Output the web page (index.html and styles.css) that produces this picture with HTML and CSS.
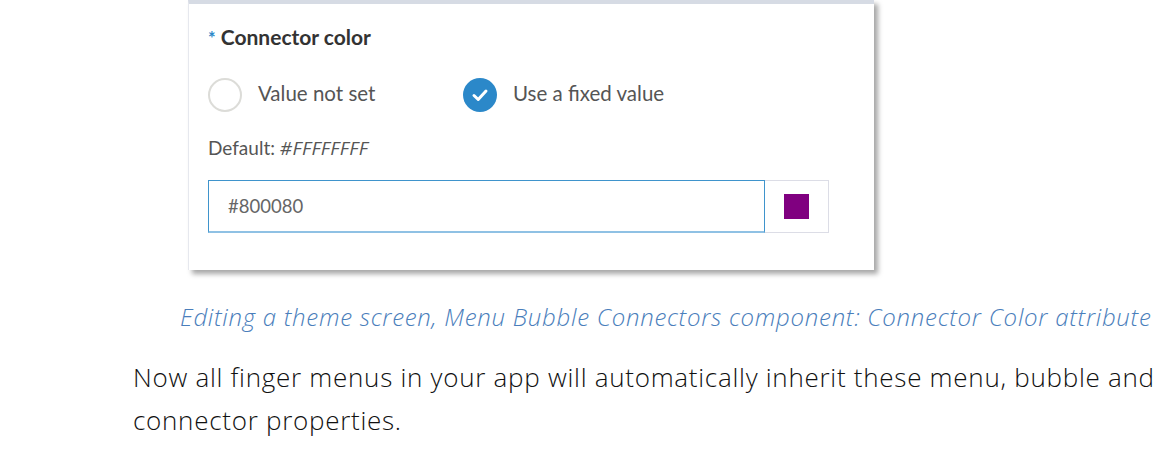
FILE: index.html
```html
<!DOCTYPE html>
<html>
<head>
<meta charset="utf-8">
<link rel="stylesheet" href="styles.css">
</head>
<body>
<div class="card">
  <div class="title"><span class="req">*</span> Connector color</div>
  <div class="radios">
    <div class="opt opt-first"><span class="radio"></span><span class="lbl">Value not set</span></div>
    <div class="opt"><span class="radio checked"><svg width="34" height="34" viewBox="0 0 34 34"><circle cx="17" cy="17" r="17" fill="#2b88c9"/><polyline points="11,17.5 15.2,21.5 23,13" fill="none" stroke="#fff" stroke-width="3" stroke-linecap="round" stroke-linejoin="round"/></svg></span><span class="lbl">Use a fixed value</span></div>
  </div>
  <div class="default">Default: <em>#FFFFFFFF</em></div>
  <div class="field">
    <div class="input">#800080</div>
    <div class="swatch"><span class="chip"></span></div>
  </div>
</div>
<div class="caption">Editing a theme screen, Menu Bubble Connectors component: Connector Color attribute</div>
<div class="body-text">Now all finger menus in your app will automatically inherit these menu, bubble and<br>connector properties.</div>
</body>
</html>
```
FILE: styles.css
```css
html, body { margin: 0; padding: 0; background: #fff; }
body { width: 1167px; height: 473px; overflow: hidden; }
.card {
  margin-left: 188px;
  width: 686px;
  box-sizing: border-box;
  border-top: 4px solid #d6dbe4;
  border-left: 1px solid #e6e8ee;
  background: #fff;
  padding: 21px 20px 37px 19px;
  box-shadow: 4px 4px 5px rgba(0,0,0,0.35);
  font-family: Lato, "Open Sans", sans-serif;
}
.title { font-size: 21px; font-weight: 700; line-height: 24px; color: #333; }
.req { color: #2b88c9; font-size: 18px; }
.radios { display: flex; align-items: center; margin-top: 28px; height: 34px; }
.opt { display: flex; align-items: center; }
.opt-first { width: 255px; }
.radio { width: 34px; height: 34px; box-sizing: border-box; border: 2px solid #dcdcd8; border-radius: 50%; display: block; }
.radio.checked { border: none; }
.radio svg { display: block; }
.lbl { margin-left: 16px; font-size: 20.5px; line-height: 24px; color: #555; margin-top: -5px; }
.default { margin-top: 25px; height: 22px; line-height: 22px; font-size: 19px; color: #555; }
.default em { font-family: "Open Sans", sans-serif; font-style: italic; font-size: 19px; line-height: 1; letter-spacing: 0.4px; }
.field { display: flex; margin-top: 21px; height: 53px; }
.input {
  width: 557px; box-sizing: border-box;
  border: 1px solid #3f94cc;
  border-bottom: 2px solid #8fc1e4;
  padding-left: 19px;
  display: flex; align-items: center;
  font-size: 18.5px; color: #666;
}
.swatch {
  width: 64px; box-sizing: border-box;
  border: 1px solid #dcdde6; border-left: none;
  display: flex; align-items: center; justify-content: center;
}
.chip { width: 25px; height: 25px; background: #800080; display: block; }
.caption {
  margin-top: 32px; margin-left: 180px;
  line-height: 30px; font-size: 24px; letter-spacing: 0.73px;
  font-family: "Open Sans", sans-serif; font-weight: 300; font-style: italic;
  color: #4a7ebb; white-space: nowrap;
}
.body-text {
  margin-top: 24px; margin-left: 133px;
  line-height: 43px; font-size: 26px; letter-spacing: 0.72px;
  font-family: "Open Sans", sans-serif; font-weight: 300;
  color: #111; white-space: nowrap;
}
```
